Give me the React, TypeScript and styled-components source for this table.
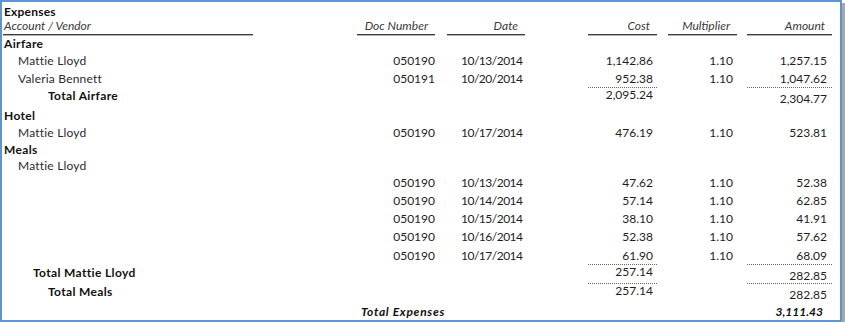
import React from 'react';
import styled, { createGlobalStyle, css } from 'styled-components';

const GlobalStyle = createGlobalStyle`
  html, body, #root {
    margin: 0;
    padding: 0;
    background: #fff;
  }
  body {
    font-family: Lato, "Liberation Sans", sans-serif;
    font-size: 12px;
    color: #1e1e1e;
  }
`;

const columns = `
  [acct-start] 250px [acct-end] 104px
  [doc-start] 78px [doc-end] 12px
  [date-start] 78px [date-end] 63px
  [cost-start] 69px [cost-end] 11px
  [mult-start] 69px [mult-end] 10px
  [amt-start] 85px [amt-end]
`;

type Col = 'acct' | 'doc' | 'date' | 'cost' | 'mult' | 'amt';

const Frame = styled.div`
  width: 842px;
  height: 322px;
  box-sizing: border-box;
  border: 2px solid #5b95d5;
  box-shadow: 3px 3px 0 #a8a8a8;
  padding: 0 0 0 1px;
  background: #fff;
  overflow: hidden;
`;

const Row = styled.div<{ $h: number }>`
  display: grid;
  grid-template-columns: ${columns};
  height: ${(p) => p.$h}px;
  line-height: 12px;
`;

const HeaderRow = styled(Row)`
  align-items: end;
`;

const TitleBlock = styled.div`
  grid-column: acct-start / acct-end;
  align-self: stretch;
  display: flex;
  flex-direction: column;
  padding: 3px 0 0 1px;
  line-height: 14px;
  border-bottom: 1px solid #3a3a3a;
  box-shadow: 0 1px 0 #b4b4b4;
`;

const Title = styled.div`
  font-weight: 700;
  color: #111;
  letter-spacing: 0.2px;
`;

const Subtitle = styled.div`
  font-style: italic;
  color: #3a3a3a;
`;

const ColHead = styled.div<{ $col: Col }>`
  grid-column: ${(p) => `${p.$col}-start / ${p.$col}-end`};
  align-self: stretch;
  display: flex;
  align-items: flex-end;
  justify-content: flex-end;
  padding: 0 7px 2px 0;
  font-style: italic;
  color: #3a3a3a;
  border-bottom: 1px solid #3a3a3a;
  box-shadow: 0 1px 0 #b4b4b4;
`;

const Label = styled.div<{ $indent: number; $bold?: boolean }>`
  grid-column: acct-start / acct-end;
  align-self: center;
  padding-left: ${(p) => p.$indent}px;
  padding-top: 2px;
  font-weight: ${(p) => (p.$bold ? 700 : 400)};
  letter-spacing: ${(p) => (p.$bold ? 0.35 : 0.2)}px;
  color: ${(p) => (p.$bold ? '#111' : '#2a2a33')};
  white-space: nowrap;
`;

const TotalLabel = styled(Label)`
  padding-top: 0;
  padding-bottom: 1px;
`;

const Value = styled.div<{ $col: Col; $pad: number; $left?: boolean }>`
  grid-column: ${(p) => `${p.$col}-start / ${p.$col}-end`};
  align-self: center;
  padding-top: 2px;
  text-align: ${(p) => (p.$left ? 'left' : 'right')};
  ${(p) =>
    p.$left
      ? css`
          padding-left: ${p.$pad}px;
          letter-spacing: -0.5px;
        `
      : css`
          padding-right: ${p.$pad}px;
        `}
  color: #1e1e1e;
`;

const TotalValue = styled.div<{ $col: Col; $pad: number; $low?: boolean }>`
  grid-column: ${(p) => `${p.$col}-start / ${p.$col}-end`};
  align-self: stretch;
  display: flex;
  justify-content: flex-end;
  align-items: ${(p) => (p.$low ? 'flex-end' : 'flex-start')};
  padding: 1px ${(p) => p.$pad}px 1px 0;
  border-top: 1px dotted #6a6a6a;
`;

const GrandLabel = styled.div`
  grid-column: acct-end / date-start;
  align-self: center;
  padding-top: 2px;
  text-align: right;
  padding-right: 2px;
  font-weight: 700;
  font-style: italic;
  letter-spacing: 0.7px;
  color: #111;
`;

const GrandValue = styled.div`
  grid-column: amt-start / amt-end;
  align-self: center;
  padding-top: 2px;
  text-align: right;
  padding-right: 9px;
  font-weight: 700;
  font-style: italic;
  color: #111;
`;

type Entry = { doc: string; date: string; cost: string; mult: string; amount: string };

type Line =
  | { kind: 'group'; label: string; h: number }
  | { kind: 'vendor'; label: string; h: number; entry?: Entry }
  | { kind: 'detail'; h: number; entry: Entry }
  | { kind: 'total'; label: string; indent: number; h: number; cost: string; amount: string };

const e = (doc: string, date: string, cost: string, amount: string): Entry => ({
  doc,
  date,
  cost,
  mult: '1.10',
  amount,
});

const lines: Line[] = [
  { kind: 'group', label: 'Airfare', h: 16 },
  { kind: 'vendor', label: 'Mattie Lloyd', h: 18, entry: e('050190', '10/13/2014', '1,142.86', '1,257.15') },
  { kind: 'vendor', label: 'Valeria Bennett', h: 18, entry: e('050191', '10/20/2014', '952.38', '1,047.62') },
  { kind: 'total', label: 'Total Airfare', indent: 45, h: 19, cost: '2,095.24', amount: '2,304.77' },
  { kind: 'group', label: 'Hotel', h: 17 },
  { kind: 'vendor', label: 'Mattie Lloyd', h: 18, entry: e('050190', '10/17/2014', '476.19', '523.81') },
  { kind: 'group', label: 'Meals', h: 15 },
  { kind: 'vendor', label: 'Mattie Lloyd', h: 17 },
  { kind: 'detail', h: 18, entry: e('050190', '10/13/2014', '47.62', '52.38') },
  { kind: 'detail', h: 18, entry: e('050190', '10/14/2014', '57.14', '62.85') },
  { kind: 'detail', h: 18, entry: e('050190', '10/15/2014', '38.10', '41.91') },
  { kind: 'detail', h: 18, entry: e('050190', '10/16/2014', '52.38', '57.62') },
  { kind: 'detail', h: 19, entry: e('050190', '10/17/2014', '61.90', '68.09') },
  { kind: 'total', label: 'Total Mattie Lloyd', indent: 30, h: 19, cost: '257.14', amount: '282.85' },
  { kind: 'total', label: 'Total Meals', indent: 45, h: 19, cost: '257.14', amount: '282.85' },
];

const EntryCells = ({ entry }: { entry: Entry }) => (
  <>
    <Value $col="doc" $pad={0}>{entry.doc}</Value>
    <Value $col="date" $pad={14} $left>{entry.date}</Value>
    <Value $col="cost" $pad={4}>{entry.cost}</Value>
    <Value $col="mult" $pad={4}>{entry.mult}</Value>
    <Value $col="amt" $pad={5}>{entry.amount}</Value>
  </>
);

const ReportLine = ({ line }: { line: Line }) => {
  switch (line.kind) {
    case 'group':
      return (
        <Row $h={line.h}>
          <Label $indent={1} $bold>{line.label}</Label>
        </Row>
      );
    case 'vendor':
      return (
        <Row $h={line.h}>
          <Label $indent={15}>{line.label}</Label>
          {line.entry && <EntryCells entry={line.entry} />}
        </Row>
      );
    case 'detail':
      return (
        <Row $h={line.h}>
          <EntryCells entry={line.entry} />
        </Row>
      );
    case 'total':
      return (
        <Row $h={line.h}>
          <TotalLabel $indent={line.indent} $bold>{line.label}</TotalLabel>
          <TotalValue $col="cost" $pad={4}>{line.cost}</TotalValue>
          <TotalValue $col="amt" $pad={5} $low>{line.amount}</TotalValue>
        </Row>
      );
  }
};

const App = () => (
  <>
    <GlobalStyle />
    <Frame>
      <HeaderRow $h={33}>
        <TitleBlock>
          <Title>Expenses</Title>
          <Subtitle>Account / Vendor</Subtitle>
        </TitleBlock>
        <ColHead $col="doc">Doc Number</ColHead>
        <ColHead $col="date">Date</ColHead>
        <ColHead $col="cost">Cost</ColHead>
        <ColHead $col="mult">Multiplier</ColHead>
        <ColHead $col="amt">Amount</ColHead>
      </HeaderRow>
      {lines.map((line, i) => (
        <ReportLine key={i} line={line} />
      ))}
      <Row $h={18}>
        <GrandLabel>Total Expenses</GrandLabel>
        <GrandValue>3,111.43</GrandValue>
      </Row>
    </Frame>
  </>
);

export default App;
